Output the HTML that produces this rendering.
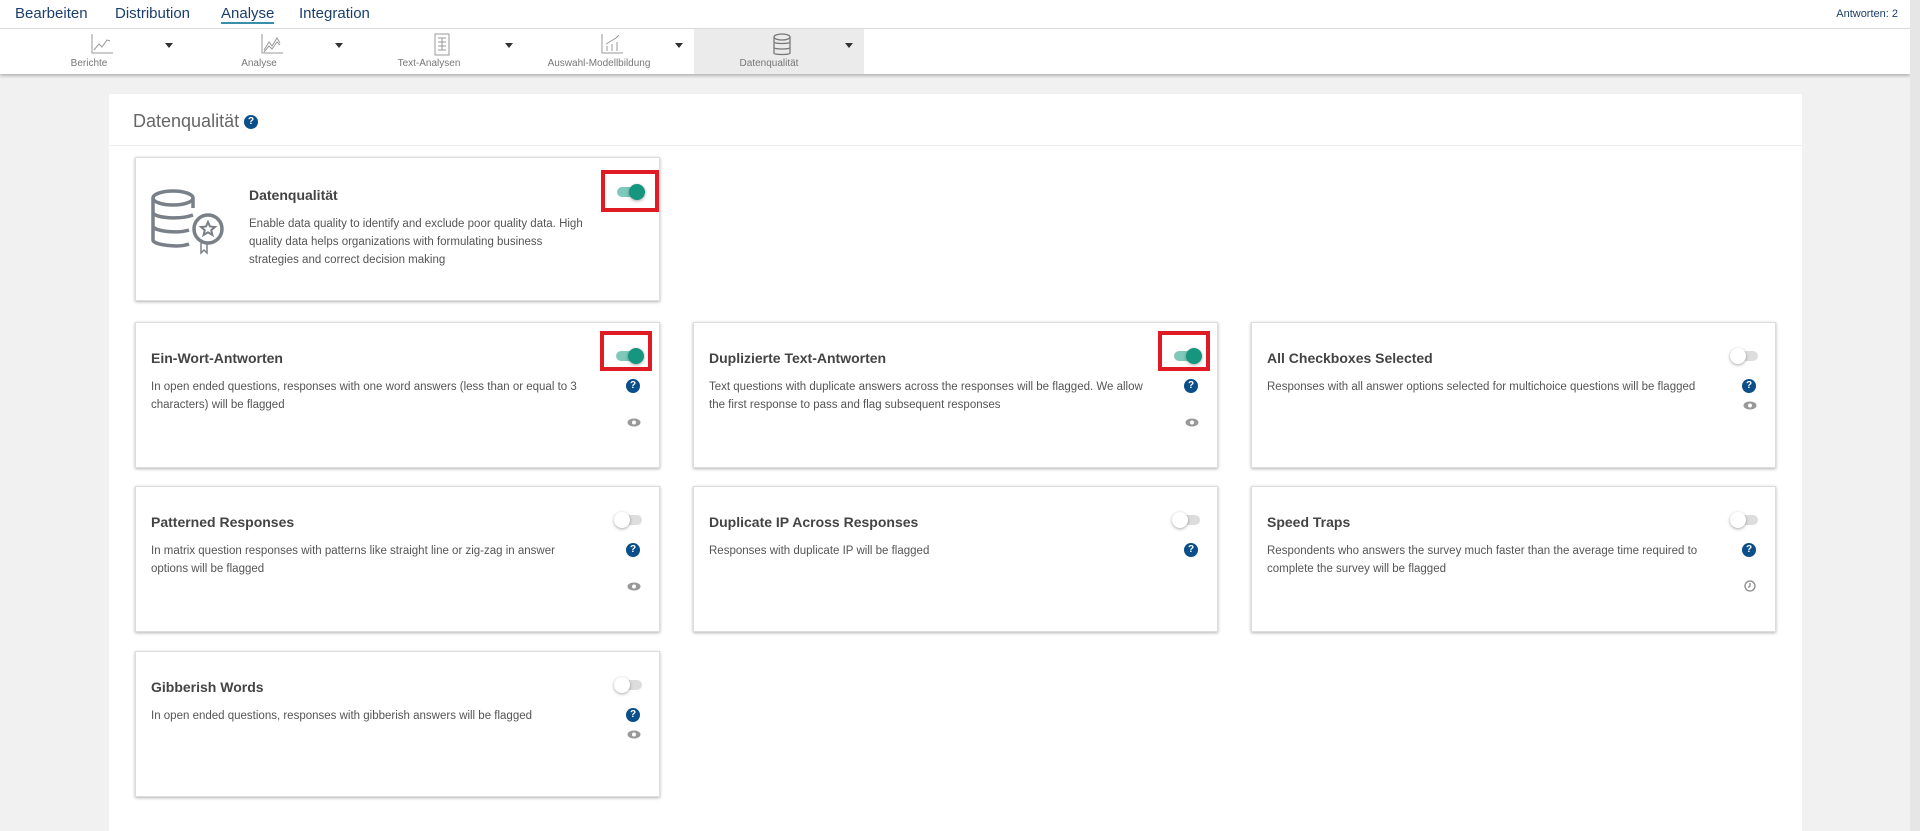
<!DOCTYPE html>
<html><head><meta charset="utf-8"><style>
*{box-sizing:border-box;margin:0;padding:0}
body{width:1920px;height:831px;overflow:hidden;background:#f1f1f1;font-family:"Liberation Sans",sans-serif;position:relative;color:#444}
.top{position:absolute;left:0;top:0;width:1910px;height:29px;background:#fff;border-bottom:1px solid #ddd}
.top a{position:absolute;top:5px;font-size:15px;color:#1b3f6b;text-decoration:none}
.bar{position:absolute;left:0;top:29px;width:1910px;height:45px;background:#fff;box-shadow:0 2px 3px rgba(0,0,0,.25)}
.tab{position:absolute;top:0;width:170px;height:45px}
.tab .lb{position:absolute;top:29px;width:150px;text-align:center;font-size:10px;color:#777}
.tab svg{position:absolute;top:4px}
.tab .ar{position:absolute;top:14px;left:151px;width:0;height:0;border-left:4px solid transparent;border-right:4px solid transparent;border-top:5px solid #333}
.scroll{position:absolute;right:0;top:0;width:10px;height:831px;background:#e6e6e6}
.panel{position:absolute;left:109px;top:94px;width:1693px;height:737px;background:#fff}
.ph{position:absolute;left:24px;top:17px;font-size:18px;color:#666}
.q{display:inline-block;width:14px;height:14px;border-radius:50%;background:#0b4f8a;color:#fff;font-size:10px;font-weight:bold;text-align:center;line-height:14px;vertical-align:middle}
.hr{position:absolute;left:0;top:51px;width:1693px;height:1px;background:#eee}
.card{position:absolute;width:525px;height:146px;background:#fff;border:1px solid #ddd;box-shadow:0 1px 3px rgba(0,0,0,.3)}
.card h3{position:absolute;left:15px;top:27px;font-size:14px;font-weight:bold;color:#444}
.card p{position:absolute;left:15px;top:55px;font-size:11.5px;line-height:18px;color:#555;white-space:nowrap}
.tg{position:absolute;right:15px;top:26px;width:30px;height:14px}
.tg .t{position:absolute;left:2px;top:2px;width:26px;height:10px;border-radius:5px;background:#ddd}
.tg .k{position:absolute;left:0;top:-1px;width:16px;height:16px;border-radius:50%;background:#fff;box-shadow:0 1px 3px rgba(0,0,0,.35)}
.tg.on .t{background:#7fc8bb}.tg.on .k{left:14px;background:#16957f}
.red{position:absolute;border:4px solid #e01b24}
.card .q{position:absolute;right:19px;top:56px}
.eye{position:absolute;right:18px;width:14px;height:9px}
</style></head><body>
<div class="top">
<a style="left:15px">Bearbeiten</a><a style="left:115px">Distribution</a>
<a style="left:221px;border-bottom:2px solid #3a8fa8">Analyse</a><a style="left:299px">Integration</a>
<span style="position:absolute;right:12px;top:8px;font-size:11px;color:#1b3f6b">Antworten: 2</span>
</div>
<div class="bar">
<div class="tab" style="left:14px"><svg style="left:76px" width="24" height="22" viewBox="0 0 24 22" fill="none" stroke="#999" stroke-width="1"><path d="M2 1V20H23M4 17L9 11 12 14 17 7 20 8"/></svg><div class="lb">Berichte</div><div class="ar"></div></div>
<div class="tab" style="left:184px"><svg style="left:76px" width="24" height="22" viewBox="0 0 24 22" fill="none" stroke="#999" stroke-width="1"><path d="M2 1V20H23M4 17L9 9 12 13 17 5 20 10M4 19L9 13 12 16 17 9 20 12"/></svg><div class="lb">Analyse</div><div class="ar"></div></div>
<div class="tab" style="left:354px"><svg style="left:78px" width="20" height="24" viewBox="0 0 20 24" fill="none" stroke="#999" stroke-width="1"><rect x="3" y="1" width="14" height="21"/><path d="M6 5h8M6 9h8M6 13h8M6 17h8M10 5v12"/></svg><div class="lb">Text-Analysen</div><div class="ar"></div></div>
<div class="tab" style="left:524px"><svg style="left:76px" width="24" height="22" viewBox="0 0 24 22" fill="none" stroke="#999" stroke-width="1"><path d="M2 1V20H23M7 18v-5M12 18v-7M17 18v-9M6 11l5-3 5-3 3-3"/></svg><div class="lb">Auswahl-Modellbildung</div><div class="ar"></div></div>
<div class="tab" style="left:694px;background:#ebebeb"><svg style="left:77px" width="22" height="24" viewBox="0 0 22 24" fill="none" stroke="#777" stroke-width="1.3"><ellipse cx="11" cy="4" rx="8" ry="3"/><path d="M3 4v16c0 2 16 2 16 0V4M3 9c0 2 16 2 16 0M3 14.5c0 2 16 2 16 0"/></svg><div class="lb">Datenqualität</div><div class="ar"></div></div>
</div>
<div class="scroll"></div>
<div class="panel"><div class="ph">Datenqualität <span class="q">?</span></div><div class="hr"></div></div>

<div class="card" style="left:135px;top:157px;height:144px">
<svg style="position:absolute;left:15px;top:31px" width="76" height="66" viewBox="0 0 76 66" fill="none" stroke="#7a8088" stroke-width="3.5"><ellipse cx="22" cy="9" rx="20" ry="7"/><path d="M2 9v42c0 5 26 8 36 4M2 23c0 6 26 8 40 3M2 37c0 5 24 8 36 4M42 9v10"/><circle cx="57" cy="40" r="14"/><path d="M57 33l2 4.5 5 .5-3.8 3.2 1.2 4.8-4.4-2.7-4.4 2.7 1.2-4.8-3.8-3.2 5-.5z" stroke-width="2"/><path d="M50 54v10l3-3 3 3V55" stroke-width="1.5"/></svg>
<h3 style="left:113px;top:29px">Datenqualität</h3>
<p style="left:113px;top:57px">Enable data quality to identify and exclude poor quality data. High<br>quality data helps organizations with formulating business<br>strategies and correct decision making</p>
<div class="tg on" style="top:27px;right:14px"><div class="t"></div><div class="k"></div></div>
<div class="red" style="left:465px;top:12px;width:58px;height:42px"></div>
</div>

<div class="card" style="left:135px;top:322px"><h3>Ein-Wort-Antworten</h3><p>In open ended questions, responses with one word answers (less than or equal to 3<br>characters) will be flagged</p><div class="tg on"><div class="t"></div><div class="k"></div></div><div class="red" style="left:464px;top:8px;width:52px;height:40px"></div><span class="q">?</span><svg class="eye" style="top:95px" viewBox="0 0 14 9"><ellipse cx="7" cy="4.5" rx="6.5" ry="4" fill="#999"/><circle cx="7" cy="4.5" r="2" fill="#fff"/></svg></div>
<div class="card" style="left:693px;top:322px"><h3>Duplizierte Text-Antworten</h3><p>Text questions with duplicate answers across the responses will be flagged. We allow<br>the first response to pass and flag subsequent responses</p><div class="tg on"><div class="t"></div><div class="k"></div></div><div class="red" style="left:464px;top:8px;width:52px;height:40px"></div><span class="q">?</span><svg class="eye" style="top:95px" viewBox="0 0 14 9"><ellipse cx="7" cy="4.5" rx="6.5" ry="4" fill="#999"/><circle cx="7" cy="4.5" r="2" fill="#fff"/></svg></div>
<div class="card" style="left:1251px;top:322px"><h3>All Checkboxes Selected</h3><p>Responses with all answer options selected for multichoice questions will be flagged</p><div class="tg"><div class="t"></div><div class="k"></div></div><span class="q">?</span><svg class="eye" style="top:78px" viewBox="0 0 14 9"><ellipse cx="7" cy="4.5" rx="6.5" ry="4" fill="#999"/><circle cx="7" cy="4.5" r="2" fill="#fff"/></svg></div>
<div class="card" style="left:135px;top:486px"><h3>Patterned Responses</h3><p>In matrix question responses with patterns like straight line or zig-zag in answer<br>options will be flagged</p><div class="tg"><div class="t"></div><div class="k"></div></div><span class="q">?</span><svg class="eye" style="top:95px" viewBox="0 0 14 9"><ellipse cx="7" cy="4.5" rx="6.5" ry="4" fill="#999"/><circle cx="7" cy="4.5" r="2" fill="#fff"/></svg></div>
<div class="card" style="left:693px;top:486px"><h3>Duplicate IP Across Responses</h3><p>Responses with duplicate IP will be flagged</p><div class="tg"><div class="t"></div><div class="k"></div></div><span class="q">?</span></div>
<div class="card" style="left:1251px;top:486px"><h3>Speed Traps</h3><p>Respondents who answers the survey much faster than the average time required to<br>complete the survey will be flagged</p><div class="tg"><div class="t"></div><div class="k"></div></div><span class="q">?</span><svg style="position:absolute;right:19px;top:93px" width="12" height="12" viewBox="0 0 12 12" fill="none" stroke="#888" stroke-width="1.3"><circle cx="6" cy="6" r="5"/><path d="M6 3v3.2L4 7.5"/></svg></div>
<div class="card" style="left:135px;top:651px"><h3>Gibberish Words</h3><p>In open ended questions, responses with gibberish answers will be flagged</p><div class="tg"><div class="t"></div><div class="k"></div></div><span class="q">?</span><svg class="eye" style="top:78px" viewBox="0 0 14 9"><ellipse cx="7" cy="4.5" rx="6.5" ry="4" fill="#999"/><circle cx="7" cy="4.5" r="2" fill="#fff"/></svg></div>
</body></html>
